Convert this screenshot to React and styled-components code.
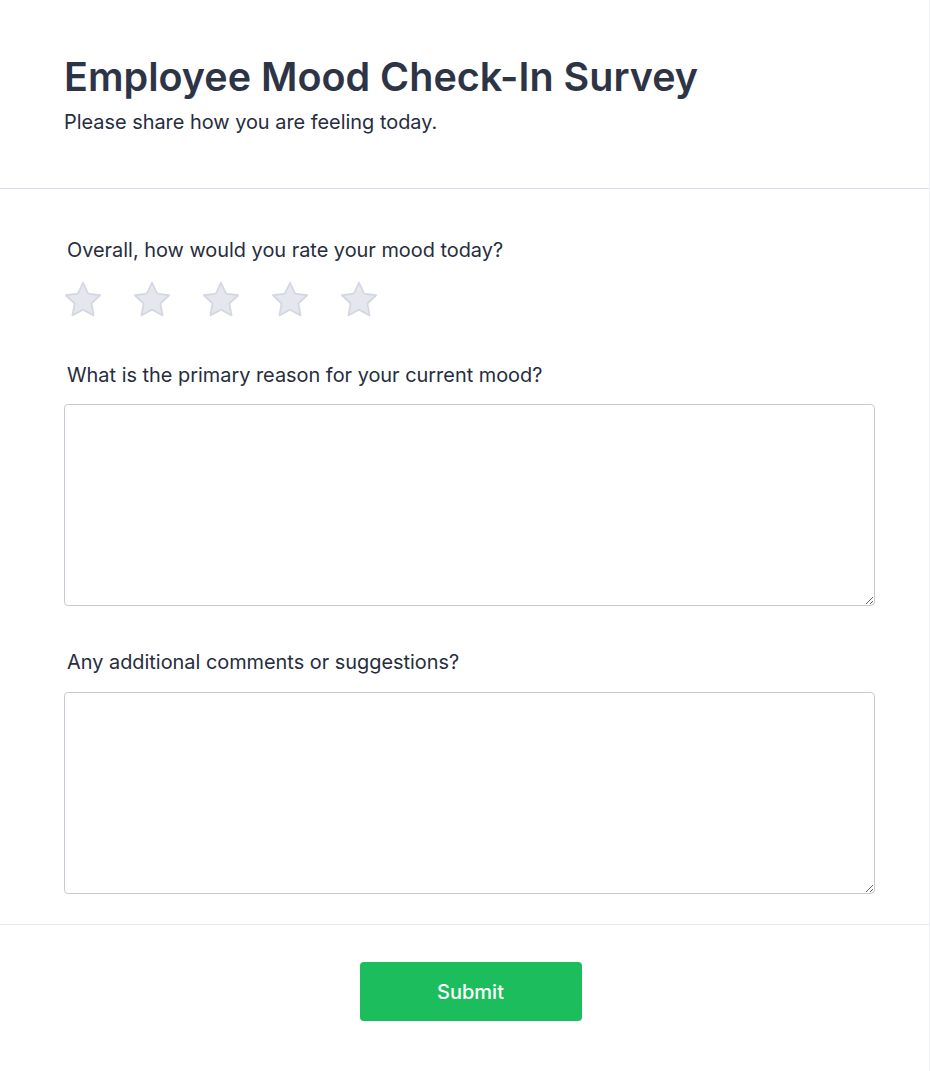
import React from 'react';
import styled, { createGlobalStyle } from 'styled-components';

const GlobalStyle = createGlobalStyle`
    body {
        margin: 0;
        background: #ffffff;
        font-family: Inter, "Noto Sans", sans-serif;
        color: #2d3446;
    }
    * {
        box-sizing: border-box;
    }
`;

const Page = styled.div`
    width: 930px;
    min-height: 1071px;
    border-right: 1px solid #eef0f5;
    background: #ffffff;
`;

const Header = styled.header`
    padding: 53px 54px 51px 64px;
    border-bottom: 1px solid #dcdfea;
`;

const Title = styled.h1`
    margin: 0;
    font-size: 39.5px;
    line-height: 48px;
    font-weight: 600;
    color: #2d3446;
`;

const Subtitle = styled.p`
    margin: 6px 0 0;
    font-size: 19.9px;
    line-height: 30px;
    font-weight: 400;
    color: #262d3e;
`;

const Form = styled.div`
    padding: 46px 55px 30px 64px;
    border-bottom: 1px solid #e6e8ef;
    display: flex;
    flex-direction: column;
`;

const Question = styled.div`
    display: flex;
    flex-direction: column;
    margin-bottom: ${props => props.space || 0}px;
`;

const Label = styled.label`
    padding-left: 3px;
    font-size: 19.9px;
    line-height: 30px;
    font-weight: 400;
    color: #262d3e;
    margin-bottom: ${props => props.gap || 15}px;
`;

const Stars = styled.div`
    display: flex;
    gap: 31px;
`;

const StarButton = styled.button`
    background: none;
    border: none;
    padding: 0;
    width: 38px;
    height: 36px;
    cursor: pointer;
    display: block;
`;

const TextArea = styled.textarea`
    display: block;
    width: 811px;
    height: 202px;
    border: 1px solid #c7cad6;
    border-radius: 4px;
    padding: 10px;
    font-family: Inter, sans-serif;
    font-size: 16px;
    resize: vertical;
    outline: none;
`;

const Footer = styled.div`
    display: flex;
    justify-content: center;
    padding: 37px 52px 0 64px;
`;

const SubmitButton = styled.button`
    width: 222px;
    height: 59px;
    border: none;
    border-radius: 4px;
    background: #1bbd5d;
    color: #ffffff;
    font-family: Inter, sans-serif;
    font-size: 20px;
    font-weight: 500;
    cursor: pointer;
`;

const Star = () => (
    <StarButton type="button">
        <svg width="38" height="36" viewBox="0 0 38 36">
            <path
                d="M19 1.8 L24.17 12.68 L36.12 14.24 L27.37 22.52 L29.58 34.36 L19 28.6 L8.42 34.36 L10.63 22.52 L1.88 14.24 L13.83 12.68 Z"
                fill="#e5e7ef"
                stroke="#d5d8e2"
                strokeWidth="1.8"
                strokeLinejoin="round"
            />
        </svg>
    </StarButton>
);

const App = () => {
    return (
        <Page>
            <GlobalStyle />
            <Header>
                <Title>Employee Mood Check-In Survey</Title>
                <Subtitle>Please share how you are feeling today.</Subtitle>
            </Header>
            <Form>
                <Question space={43}>
                    <Label gap={16}>Overall, how would you rate your mood today?</Label>
                    <Stars>
                        {[1, 2, 3, 4, 5].map(n => <Star key={n} />)}
                    </Stars>
                </Question>
                <Question space={41}>
                    <Label gap={14}>What is the primary reason for your current mood?</Label>
                    <TextArea />
                </Question>
                <Question>
                    <Label gap={15}>Any additional comments or suggestions?</Label>
                    <TextArea />
                </Question>
            </Form>
            <Footer>
                <SubmitButton>Submit</SubmitButton>
            </Footer>
        </Page>
    );
};

export default App;
